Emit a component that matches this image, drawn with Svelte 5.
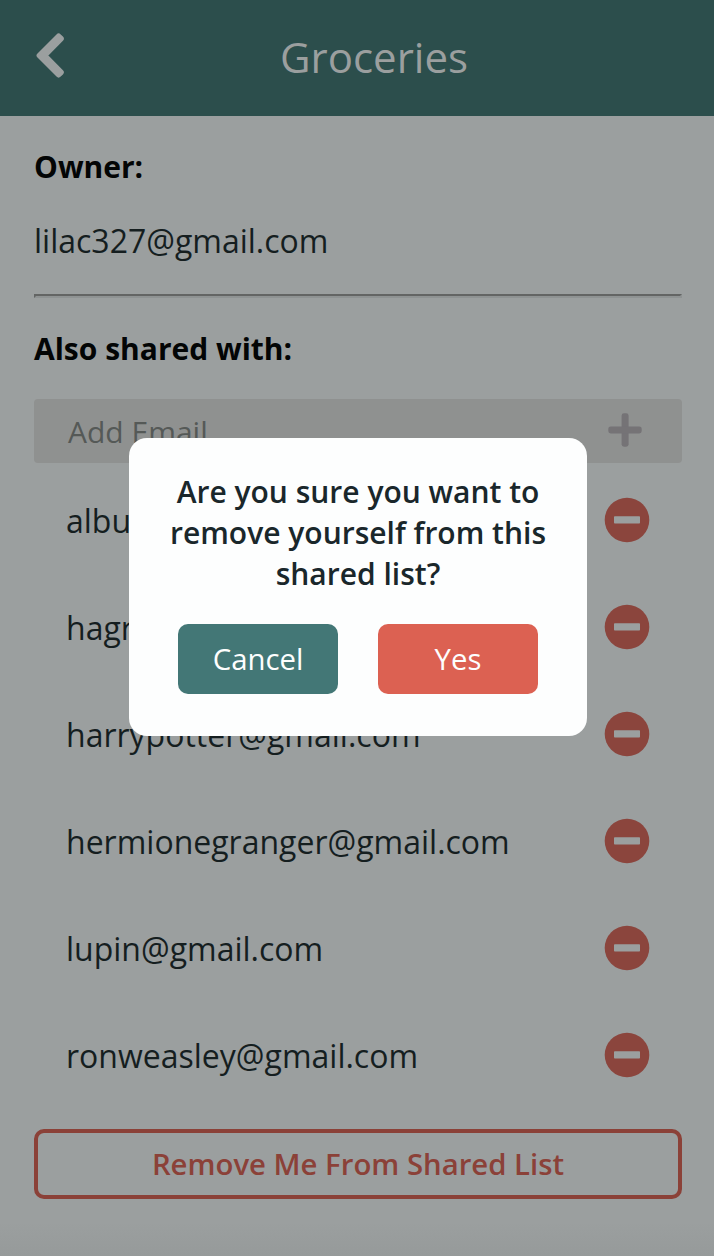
<script>
  const emails = [
    'albusdumbledore@gmail.com',
    'hagrid@gmail.com',
    'harrypotter@gmail.com',
    'hermionegranger@gmail.com',
    'lupin@gmail.com',
    'ronweasley@gmail.com'
  ];
</script>

<div class="page">
  <header>
    <svg class="back" viewBox="0 0 30 46" width="30" height="46" aria-hidden="true">
      <path d="M4.6 22.5 L23.6 3.5 L25.8 5.7 L9.3 22.5 L25.8 39.3 L23.6 41.5 Z" fill="#9b9f9f" stroke="#9b9f9f" stroke-width="6" stroke-linejoin="round" />
    </svg>
    <h1>Groceries</h1>
  </header>

  <main>
    <h2>Owner:</h2>
    <p class="owner">lilac327@gmail.com</p>
    <hr />
    <h2 class="shared">Also shared with:</h2>
    <div class="add">
      <span>Add Email</span>
      <svg viewBox="0 0 34 34" width="34" height="34" aria-hidden="true">
        <rect x="13.6" y="0.3" width="7" height="33.4" rx="2.4" fill="#757376" />
        <rect x="0.3" y="13.4" width="33.4" height="7" rx="2.4" fill="#757376" />
      </svg>
    </div>
    <ul>
      {#each emails as email}
        <li>
          <span>{email}</span>
          <svg viewBox="0 0 46 46" width="46" height="46" aria-hidden="true">
            <circle cx="23" cy="23" r="22.3" fill="#8b453d" />
            <rect x="10" y="19.2" width="26" height="7.4" rx="0.8" fill="#9b9f9f" />
          </svg>
        </li>
      {/each}
    </ul>
    <button class="leave">Remove Me From Shared List</button>
  </main>

  <div class="overlay">
    <div class="dialog" role="dialog">
      <p>Are you sure you want to<br />remove yourself from this<br />shared list?</p>
      <div class="actions">
        <button class="cancel">Cancel</button>
        <button class="yes">Yes</button>
      </div>
    </div>
  </div>
</div>

<style>
  :global(body) {
    margin: 0;
    background: #9b9f9f;
  }
  * {
    box-sizing: border-box;
  }
  .page {
    position: relative;
    height: 1256px;
    overflow: hidden;
    font-family: 'Open Sans', sans-serif;
    font-size: 32px;
    color: #151e1f;
    background: linear-gradient(#9b9f9f 0, #9b9f9f 1222px, #969a9a 1256px);
  }
  header {
    display: grid;
    grid-template-columns: 34px 30px 1fr;
    height: 116px;
    background: #2c4e4c;
  }
  .back {
    grid-column: 2;
    margin-top: 33px;
    margin-left: 1px;
  }
  h1 {
    margin: 0 30px 0 0;
    font-size: 42px;
    font-weight: 400;
    line-height: 114px;
    text-align: center;
    color: #9b9f9f;
  }
  main {
    display: flex;
    flex-direction: column;
    padding: 0 32px 0 34px;
  }
  h2 {
    margin: 30px 0 0;
    font-size: 30px;
    font-weight: 700;
    line-height: 42px;
    color: #030505;
  }
  .owner {
    margin: 31px 0 0;
    line-height: 44px;
  }
  hr {
    width: 100%;
    height: 4px;
    margin: 31px 0 0;
    border: 2px solid;
    border-color: #636564 #8f9393 #8f9393 #636564;
  }
  .shared {
    margin-top: 30px;
  }
  .add {
    display: flex;
    align-items: center;
    justify-content: space-between;
    height: 64px;
    margin-top: 29px;
    padding: 0 40px 2px 34px;
    border-radius: 4px;
    background: #8f9190;
    color: #555957;
    font-size: 30px;
  }
  .add span {
    padding-top: 3px;
  }
  ul {
    margin: 3px 0 0;
    padding: 0;
    list-style: none;
  }
  li {
    display: flex;
    align-items: center;
    justify-content: space-between;
    height: 107px;
    padding: 0 32px;
  }
  li span {
    padding-top: 1px;
  }
  button {
    font-family: inherit;
    font-size: 29.33px;
    border: 0;
    padding: 0;
    border-radius: 10px;
  }
  .leave {
    height: 70px;
    margin-top: 21px;
    border: 4px solid #8b4138;
    background: none;
    color: #8b4138;
    font-weight: 600;
  }
  .overlay {
    position: absolute;
    inset: 0;
    padding: 438px 127px 0 129px;
  }
  .dialog {
    height: 298px;
    padding-top: 33px;
    border-radius: 18px;
    background: #fdfefe;
  }
  .dialog p {
    margin: 0;
    font-size: 30px;
    font-weight: 600;
    line-height: 41px;
    text-align: center;
    color: #1a272b;
  }
  .actions {
    display: flex;
    justify-content: center;
    gap: 40px;
    margin-top: 30px;
  }
  .actions button {
    width: 160px;
    height: 70px;
    color: #fdfefe;
  }
  .cancel {
    background: #437776;
  }
  .yes {
    background: #dc6152;
  }
</style>
